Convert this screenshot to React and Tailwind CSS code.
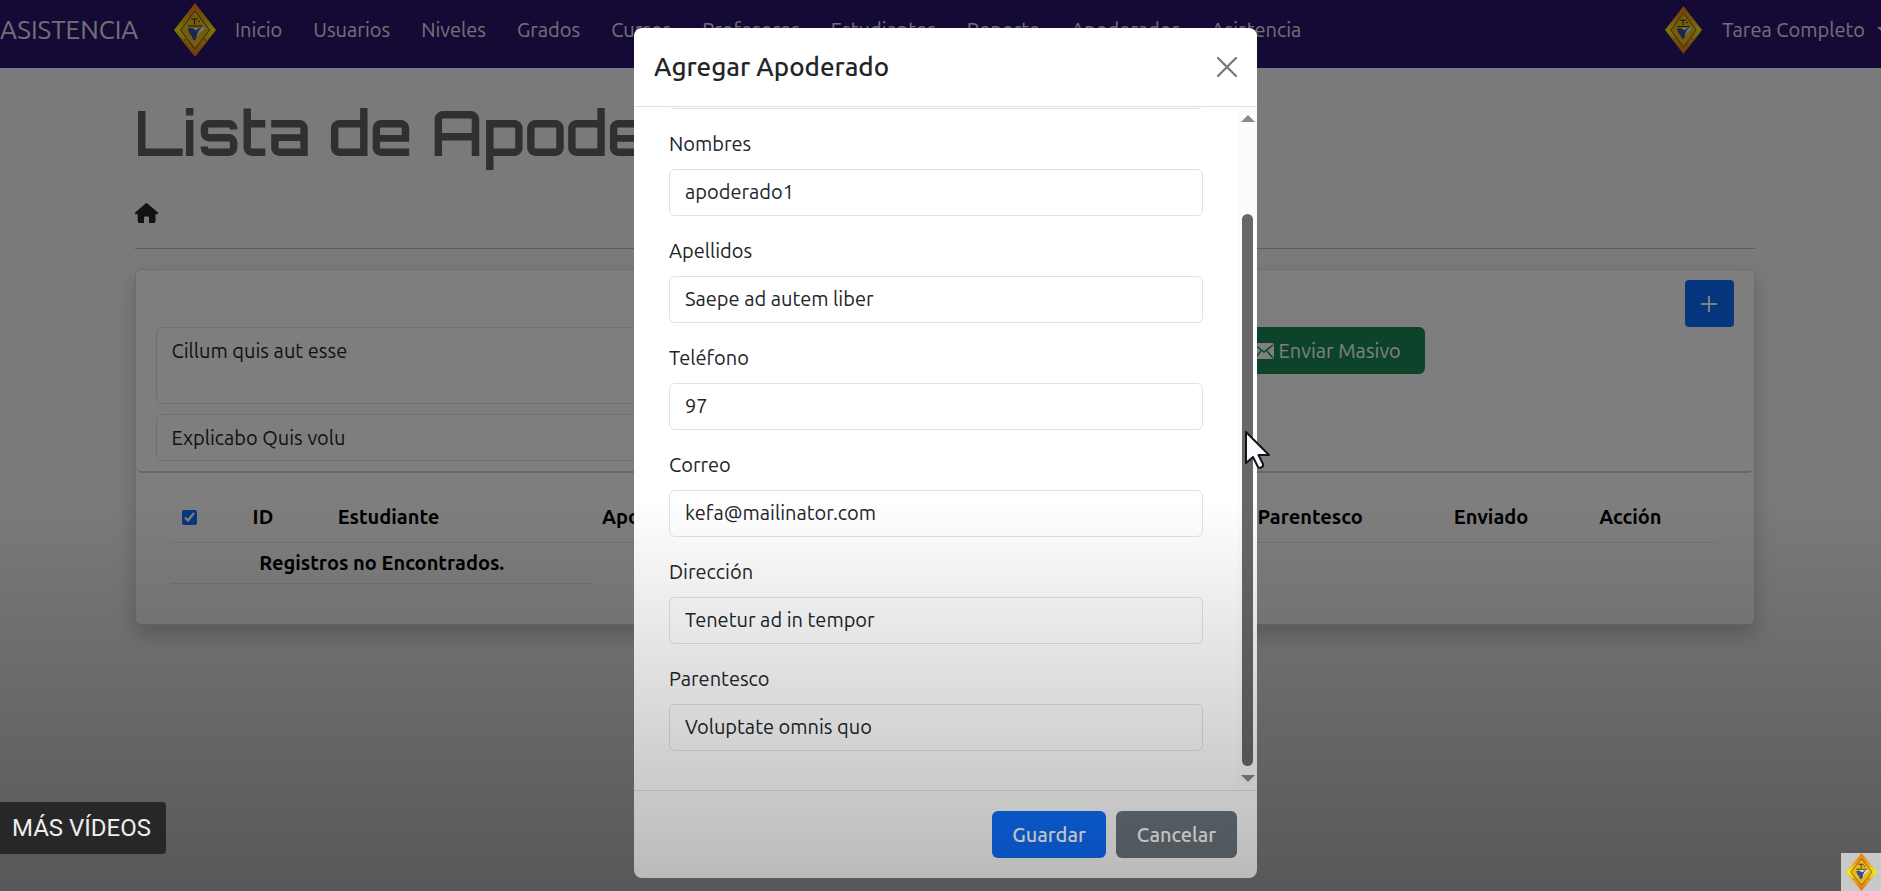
import React from "react";

const NAV = ["Inicio", "Usuarios", "Niveles", "Grados", "Cursos", "Profesores", "Estudiantes", "Reporte", "Apoderados", "Asistencia"];

const FIELDS = [
  ["nombres", "Nombres", "apoderado1"],
  ["apellidos", "Apellidos", "Saepe ad autem liber"],
  ["telefono", "Teléfono", "97"],
  ["correo", "Correo", "kefa@mailinator.com"],
  ["direccion", "Dirección", "Tenetur ad in tempor"],
  ["parentesco", "Parentesco", "Voluptate omnis quo"],
];

function Emblem({ className }) {
  return (
    <svg viewBox="0 0 42 54" className={className} aria-hidden="true" preserveAspectRatio="none">
      <defs>
        <linearGradient id="emblem" x1="0" y1="0" x2="0" y2="1">
          <stop offset="0" stopColor="#f07a18" />
          <stop offset="0.25" stopColor="#f09c10" />
          <stop offset="0.5" stopColor="#f0f010" />
          <stop offset="0.75" stopColor="#f09c10" />
          <stop offset="1" stopColor="#e86a18" />
        </linearGradient>
      </defs>
      <path d="M21 0 42 27 21 54 0 27Z" fill="url(#emblem)" />
      <path d="M21 8 35.500 27 21 46 6.500 27Z" fill="#e9b820" stroke="#5a4a18" strokeWidth="1" />
      <path d="M17 16h7M20.500 16v5.500M24 18.500h2M14 23h14" stroke="#3a3020" strokeWidth="1.200" fill="none" />
      <path d="M19 25c4 0 9 0 12-1-1 3-4 4-6 6-1 2-2 4-3 6l-4-4Z" fill="#e8ecf2" />
      <path d="M14 25.500c3-1 6 0 8 2 2-2 4-3 6-3-3 2-4 4-5 7 0 3-1 5-3 6-1-1-2-2-2-4-2-2-4-5-4-8Z" fill="#34508c" />
      <path d="M10 37h2M30 37h2" stroke="#b06010" strokeWidth="1.500" />
    </svg>
  );
}

function Navbar() {
  return (
    <nav className="flex h-[68px] items-start justify-between bg-[#28146a] whitespace-nowrap text-[#e4e0ec]">
      <div className="flex h-[60px] shrink-0 items-center">
        <a href="#inicio" className="w-[174px] text-[26px] leading-[36px]">ASISTENCIA</a>
        <Emblem className="h-[54px] w-[42px]" />
        <ul className="ml-[19px] flex gap-[31px] text-[20px]">
          {NAV.map((item) => (
            <li key={item}><a href={"#" + item.toLowerCase()}>{item}</a></li>
          ))}
        </ul>
      </div>
      <button type="button" className="flex h-[60px] shrink-0 items-center text-[20px]">
        <Emblem className="mr-5 h-[48px] w-[37px]" />
        Tarea Completo
        <svg viewBox="0 0 12 6" className="ml-3 h-[6px] w-3" aria-hidden="true"><path d="M0 0h12L6 6Z" fill="currentColor" /></svg>
      </button>
    </nav>
  );
}

const INPUT = "block w-full rounded-md border border-[#dee2e6] px-[15px] text-[20px] text-[#212529]";

function Card() {
  return (
    <section className="mt-5 overflow-hidden rounded-md border border-[#d8d8de] bg-[#fffcfe] shadow-[0_10px_20px_rgba(0,0,0,0.2)]">
      <div className="rounded-b-md border-b-2 border-[#d0ced4] px-5 py-[10px]">
        <div className="flex justify-end">
          <button type="button" aria-label="Agregar" className="flex h-[47px] w-[49px] items-center justify-center rounded-sm bg-[#0d6efd] text-white">
            <svg viewBox="0 0 16 16" className="size-4" aria-hidden="true"><path d="M8 0v16M0 8h16" stroke="currentColor" strokeWidth="2" /></svg>
          </button>
        </div>
        <div className="grid grid-cols-[2fr_1fr] items-start gap-4">
          <div>
            <textarea aria-label="Mensaje" defaultValue="Cillum quis aut esse" className={INPUT + " h-[77px] resize-none py-2 leading-[30px]"} />
            <input aria-label="Asunto" defaultValue="Explicabo Quis volu" className={INPUT + " mt-[10px] h-[47px]"} />
          </div>
          <button type="button" className="flex h-[47px] w-[212px] items-center justify-end gap-[5px] rounded-md bg-[#198754] pr-6 text-[20px] whitespace-nowrap text-white">
            <svg viewBox="0 0 20 16" className="h-4 w-5" aria-hidden="true">
              <rect width="20" height="16" rx="2" fill="currentColor" />
              <path d="m1 2 9 7 9-7M1 15l6-7M19 15l-6-7" stroke="#198754" strokeWidth="1.500" fill="none" />
            </svg>
            Enviar Masivo
          </button>
        </div>
      </div>
      <div className="px-9 pt-5 pb-10">
        <table className="w-full table-fixed border-collapse text-left text-[20px] leading-[30px] font-bold text-black">
          <colgroup>
            <col className="w-[4.6%]" />
            <col className="w-[5.5%]" />
            <col className="w-[17.1%]" />
            <col className="w-[42.4%]" />
            <col className="w-[12.7%]" />
            <col className="w-[9.4%]" />
            <col />
          </colgroup>
          <thead>
            <tr className="border-b border-[#e4e2e6]">
              <th className="px-[10px] pt-[9px] pb-[10px]"><input type="checkbox" defaultChecked aria-label="Seleccionar todo" className="block size-[15px] accent-[#0d6efd]" /></th>
              <th className="px-[10px] pt-[9px] pb-[10px]">ID</th>
              <th className="px-[10px] pt-[9px] pb-[10px]">Estudiante</th>
              <th className="px-[10px] pt-[9px] pb-[10px]">Apoderado</th>
              <th className="px-[10px] pt-[9px] pb-[10px]">Parentesco</th>
              <th className="px-[10px] pt-[9px] pb-[10px]">Enviado</th>
              <th className="px-[10px] pt-[9px] pb-[10px]">Acción</th>
            </tr>
          </thead>
          <tbody>
            <tr>
              <td colSpan={3} className="border-b border-[#e4e2e6] py-[5px] text-center">Registros no Encontrados.</td>
            </tr>
          </tbody>
        </table>
      </div>
    </section>
  );
}

function Modal() {
  return (
    <div role="dialog" aria-labelledby="modal-title" className="flex w-[623px] flex-col overflow-hidden rounded-lg bg-white text-[#212529]">
      <header className="flex h-[79px] shrink-0 items-center justify-between border-b border-[#dee2e6] px-5">
        <h2 id="modal-title" className="text-[26px] leading-[36px] font-medium">Agregar Apoderado</h2>
        <button type="button" aria-label="Cerrar" className="text-[#777]">
          <svg viewBox="0 0 20 20" className="size-5" aria-hidden="true"><path d="m1 1 18 18M19 1 1 19" stroke="currentColor" strokeWidth="2.200" strokeLinecap="round" /></svg>
        </button>
      </header>
      <div className="flex min-h-0 flex-1">
        <div className="flex min-w-0 flex-1 flex-col justify-end gap-5 overflow-hidden pr-[35px] pb-[39px] pl-[35px]">
          <input aria-label="Documento" className={INPUT + " h-[47px] shrink-0"} />
          {FIELDS.map(([id, label, value]) => (
            <div key={id} className="shrink-0">
              <label htmlFor={id} className="mb-[10px] block text-[20px] leading-[30px]">{label}</label>
              <input id={id} defaultValue={value} className={INPUT + " h-[47px] pb-[2px]"} />
            </div>
          ))}
        </div>
        <div aria-hidden="true" className="flex w-[19px] shrink-0 flex-col items-center bg-[#fcfbfd] pt-2 pb-2">
          <svg viewBox="0 0 14 7" className="h-[7px] w-[14px]"><path d="M7 0 14 7H0Z" fill="#8a888b" /></svg>
          <div className="mt-[92px] mb-[9px] w-[11px] flex-1 rounded-full bg-[#69666a]" />
          <svg viewBox="0 0 14 7" className="h-[7px] w-[14px]"><path d="M7 7 14 0H0Z" fill="#8a888b" /></svg>
        </div>
      </div>
      <footer className="flex h-[88px] shrink-0 items-center justify-end gap-[10px] border-t border-[#dee2e6] px-5 text-[20px] font-medium text-white">
        <button type="button" className="h-[47px] w-[114px] rounded-md bg-[#0d6efd]">Guardar</button>
        <button type="button" className="h-[47px] w-[121px] rounded-md bg-[#6c757d]">Cancelar</button>
      </footer>
    </div>
  );
}

export default function App() {
  return (
    <div className="relative h-screen overflow-hidden bg-[#f4f2f8] font-['Ubuntu','Noto_Sans',sans-serif]">
      <div className="-mr-2">
        <Navbar />
        <main className="mx-auto w-[86%] max-w-[1620px]">
          <h1 className="pt-[22px] font-['Orbitron','DejaVu_Sans',sans-serif] text-[62px] leading-[84px] font-semibold whitespace-nowrap text-[#606065]">Lista de Apoderados</h1>
          <a href="#inicio" aria-label="Inicio" className="mt-[29px] block w-[23px] text-[#212529]">
            <svg viewBox="0 0 23 20" className="h-5 w-[23px]" aria-hidden="true">
              <path d="M10.600.400a1.300 1.300 0 0 1 1.800 0L22.600 9.300c.9.900.3 2-.6 2h-1.500V18c0 1.300-.8 2-1.900 2H14v-5.500a1 1 0 0 0-1-1h-3a1 1 0 0 0-1 1V20H4.600c-1.200 0-1.900-.8-1.900-2v-6.700H1.100c-1 0-1.500-1.200-.7-2Z" fill="currentColor" />
            </svg>
          </a>
          <hr className="mt-[25px] border-[#b8b6bc]" />
          <Card />
        </main>
      </div>
      <div className="absolute inset-0 bg-black/50" />
      <div className="absolute inset-y-0 -right-[10px] left-0 flex items-stretch justify-center pt-7 pb-[13px]">
        <Modal />
      </div>
      <div className="pointer-events-none absolute inset-x-0 bottom-0 h-[391px] bg-linear-to-b from-black/0 to-black/28" />
      <button type="button" className="absolute bottom-[37px] left-0 h-[52px] rounded-r-sm bg-[#272727] pr-[15px] pl-3 font-['Roboto',sans-serif] text-[24px] text-[#eee]">MÁS VÍDEOS</button>
      <div className="absolute right-0 bottom-0 flex h-[38px] w-[40px] items-center justify-center bg-[#c9c9c9]">
        <Emblem className="h-[38px] w-[31px]" />
      </div>
      <svg viewBox="0 0 27 40" className="absolute top-[430px] left-[1244px] h-[40px] w-[27px]" aria-hidden="true">
        <path d="M2 2v31l7-6 5 10c1 2 6 0 5-3l-4.500-9H25Z" fill="#fdfaff" stroke="#151317" strokeWidth="2" strokeLinejoin="round" />
      </svg>
    </div>
  );
}
